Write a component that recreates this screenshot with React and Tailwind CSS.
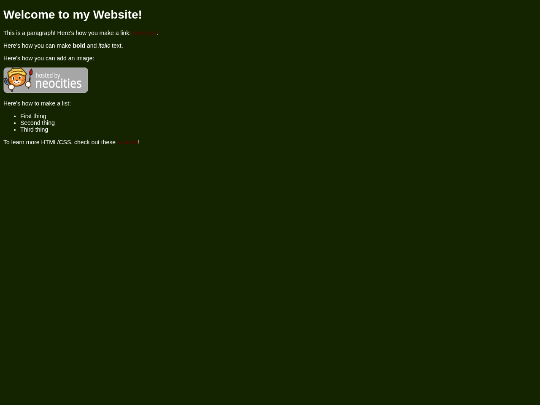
import React from 'react';

const items = ['First thing', 'Second thing', 'Third thing'];

function HostedBadge() {
  return (
    <svg viewBox="0 0 85 25.5" className="block w-[201px] h-[60px]" role="img" aria-label="Hosted by Neocities">
      <rect x="0.2" y="0.2" width="84.6" height="25.1" rx="3" fill="#a6a6a6" stroke="#bdbdbd" strokeWidth="0.4" />

      {/* Fork */}
      <path d="M0.8 11.5 L2 15.6 Q4 17.5 5.5 15.5 L5.6 11.8 M2.7 11 L4.2 16 L8.5 23.5" fill="none" stroke="#23272d" strokeWidth="1.9" strokeLinecap="round" />
      <path d="M0.9 11.8 L2.2 15.5 Q4 16.8 5.3 15.2 M2.9 11.6 L4.4 16 L8.3 23" fill="none" stroke="#7f93a5" strokeWidth="0.7" />

      {/* Head */}
      <path d="M5.6 8.5 L4.8 13 Q7.2 18.6 13.8 18.8 Q20.6 18 22 13.2 L22.2 6 L15 5 Z" fill="#ee8a2c" stroke="#4a2710" strokeWidth="0.9" />
      <path d="M9.3 14.2 L12.8 12.8 L17.4 13.3 Q17.5 16.8 13.6 17.2 Q10 17 9.3 14.2 Z" fill="#fff3e3" />
      <ellipse cx="9.8" cy="10.8" rx="1.5" ry="1.7" fill="#fff8e8" />
      <ellipse cx="16.6" cy="10.1" rx="1.5" ry="1.7" fill="#fff8e8" />
      <ellipse cx="10.1" cy="11" rx="0.8" ry="1.2" fill="#21140c" />
      <ellipse cx="16.3" cy="10.3" rx="0.8" ry="1.2" fill="#21140c" />
      <path d="M12 12.4 H14.8 L13.4 14 Z" fill="#35180e" />
      <path d="M10.8 15 Q13.4 16.7 16 14.6" fill="none" stroke="#7b3516" strokeWidth="0.6" />
      <path d="M5.4 13.6 L8 13.9 M19 13 L21.6 12.2" stroke="#8f4317" strokeWidth="0.6" />

      {/* Hat */}
      <path d="M4.8 9 L4.3 4.8 L7.4 2.9 L9 0.6 L12.5 1.3 L17.6 0.5 L20.2 3 L23.2 6.5 L21.5 8.6 L15 6.2 L9.6 7 L6.4 10 Z" fill="#eec044" stroke="#5b3e0e" strokeWidth="1" />
      <path d="M6.4 7 Q12.5 3.6 20.5 6 M9.8 2.6 L16.8 2.1" fill="none" stroke="#fbe079" strokeWidth="0.8" />
      <path d="M7.7 4.9 Q13 2.9 19.2 4.2" fill="none" stroke="#7a5317" strokeWidth="0.7" />

      {/* Brush */}
      <path d="M27.2 6.5 L25 20.5" stroke="#2d1c14" strokeWidth="1.5" strokeLinecap="round" />
      <path d="M27 8.2 L26.5 11" stroke="#e8dfd2" strokeWidth="0.7" />
      <path d="M26.2 6.8 Q25.6 3.4 28.2 1.4 Q29.5 4.2 28.4 7.2 Z" fill="#b31c25" stroke="#421010" strokeWidth="0.7" />

      {/* Paws */}
      <ellipse cx="7.8" cy="19.6" rx="3" ry="2.8" fill="#fff9ef" stroke="#5f4126" strokeWidth="0.8" />
      <ellipse cx="24.8" cy="17" rx="2.8" ry="2.8" fill="#fff9ef" stroke="#5f4126" strokeWidth="0.8" />

      <text x="32.4" y="10.2" fontSize="7" textLength="24.5" lengthAdjust="spacingAndGlyphs" fill="#f4f4f4" stroke="#f4f4f4" strokeWidth="0.1" fontFamily="'Open Sans', sans-serif">hosted by</text>
      <text x="31.9" y="20.3" fontSize="13" textLength="46.8" lengthAdjust="spacingAndGlyphs" fill="#ffffff" stroke="#ffffff" strokeWidth="0.25" fontFamily="'Open Sans', sans-serif">neocities</text>
    </svg>
  );
}

export default function App() {
  return (
    <div className="h-screen w-screen overflow-hidden bg-[#142400]">
      <div className="w-[1280px] h-[960px] origin-top-left scale-[0.421875] will-change-transform px-2 pt-[18.5px] font-['Liberation_Sans',sans-serif] text-[14px] leading-[16px] text-white">
        <h1 className="mb-[19px] text-[28px] leading-[32px] font-bold">Welcome to my Website!</h1>

        <p className="mb-[14px]">
          This is a paragraph! Here's how you make a link: <a href="#" className="text-[#620000]">Neocities</a>.
        </p>

        <p className="mb-[14px]">
          Here's how you can make <strong>bold</strong> and <em>italic</em> text.
        </p>

        <p className="mb-[14px]">Here's how you can add an image:</p>
        <div className="mb-[17px]">
          <HostedBadge />
        </div>

        <p className="mb-[14px]">Here's how to make a list:</p>

        <ul className="mb-[14px] list-disc pl-10">
          {items.map((item) => (
            <li key={item}>{item}</li>
          ))}
        </ul>

        <p>
          To learn more HTML/CSS, check out these <a href="#" className="text-[#620000]">tutorials</a>!
        </p>
      </div>
    </div>
  );
}
